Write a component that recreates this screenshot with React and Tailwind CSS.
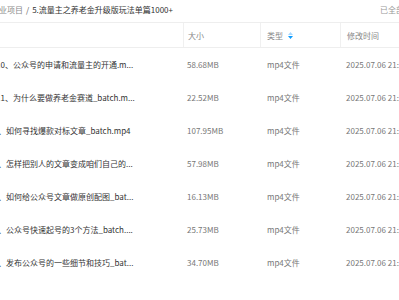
const files = [
  { name: "10、公众号的申请和流量主的开通.m...", size: "58.68MB", shift: "ml-[-4px]" },
  { name: "11、为什么要做养老金赛道_batch.m...", size: "22.52MB", shift: "ml-[-4px]" },
  { name: "、如何寻找爆款对标文章_batch.mp4", size: "107.95MB", shift: "ml-[-2px]" },
  { name: "、怎样把别人的文章变成咱们自己的...", size: "57.98MB", shift: "ml-[-2px]" },
  { name: "、如何给公众号文章做原创配图_bat...", size: "16.13MB", shift: "ml-[-2px]" },
  { name: "、公众号快速起号的3个方法_batch....", size: "25.73MB", shift: "ml-[-2px]" },
  { name: "、发布公众号的一些细节和技巧_bat...", size: "34.70MB", shift: "ml-[-2px]" },
];

function SortIcon() {
  return (
    <svg width="5" height="7" viewBox="0 0 5 7" className="ml-[5px]">
      <path d="M2.5 0 L5 3 L0 3 Z" fill="#a8d8ff" />
      <path d="M2.5 7 L5 4 L0 4 Z" fill="#0a9bff" />
    </svg>
  );
}

function App() {
  return (
    <div
      className="w-[399px] h-[300px] overflow-hidden bg-white text-[8px] leading-[11px]"
      style={{ fontFamily: '"Noto Sans CJK SC", "Noto Sans", sans-serif' }}
    >
      {/* Breadcrumb */}
      <div className="h-[22px] flex items-start pt-[4px] whitespace-nowrap">
        <div className="w-[380px] shrink-0 flex items-center">
          <span className="ml-[-9px] text-[#8a8a8a]">创业项目</span>
          <span className="mx-[3px] text-[#555]">/</span>
          <span className="text-[#333]">5.流量主之养老金升级版玩法单篇1000+</span>
        </div>
        <span className="shrink-0 text-[#999]">已全部加载，共7个</span>
      </div>

      {/* Table header */}
      <div className="grid grid-cols-[183px_77px_80px_1fr] h-[26px] border-y border-[#eeeeee] text-[#888]">
        <div />
        <div className="border-l border-[#f0f0f0] flex items-center pl-[4px]">大小</div>
        <div className="border-l border-[#f0f0f0] flex items-center pl-[6px]">
          类型
          <SortIcon />
        </div>
        <div className="border-l border-[#f0f0f0] flex items-center pl-[6px] whitespace-nowrap">修改时间</div>
      </div>

      {/* Rows */}
      <div className="flex flex-col">
        {files.map((f) => (
          <div key={f.name} className="grid grid-cols-[183px_77px_80px_1fr] h-[33px] items-center">
            <div className="overflow-hidden">
              <span className={`block whitespace-nowrap text-[#333] ${f.shift}`}>{f.name}</span>
            </div>
            <div className="pl-[4px] text-[#777]">{f.size}</div>
            <div className="pl-[7px] text-[#777]">mp4文件</div>
            <div className="pl-[6px] text-[#777] whitespace-nowrap overflow-hidden">2025.07.06 21:35</div>
          </div>
        ))}
      </div>
    </div>
  );
}

export default App;
